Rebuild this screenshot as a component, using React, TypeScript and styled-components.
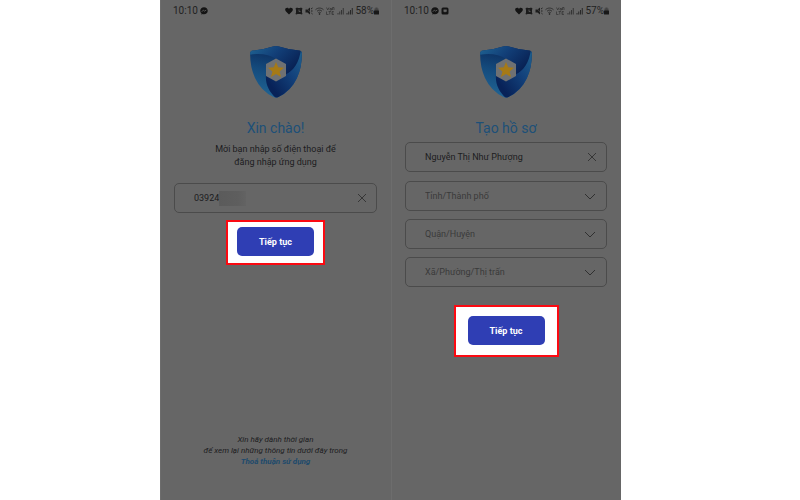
import React from "react";
import styled, { createGlobalStyle } from "styled-components";

const GlobalStyle = createGlobalStyle`
  * { box-sizing: border-box; }
  body { margin: 0; background: #fff; font-family: Roboto, "Noto Sans", sans-serif; }
  button, input, select { font: inherit; color: inherit; }
`;

const Page = styled.main`
  display: grid;
  grid-template-columns: 160fr 231fr 230fr 179fr;
  min-height: 100vh;
`;

const Phone = styled.section<{ $column: number }>`
  grid-column: ${(p) => p.$column};
  display: flex;
  flex-direction: column;
  align-items: center;
  padding: 0 14px 32px;
  background: #666;
  box-shadow: inset 1px 0 #6d6d6d;
  color: #1c1c1e;
`;

const StatusBar = styled.header`
  align-self: stretch;
  display: flex;
  align-items: center;
  gap: 2px;
  height: 21px;
  margin-left: -1px;
  margin-right: -2px;
  font-size: 10px;
  line-height: 12px;
  color: #222;

  svg { flex: none; }
`;

const StatusIcons = styled.div`
  display: flex;
  align-items: center;
  gap: 2px;
  margin-left: auto;
  white-space: nowrap;
`;

const Battery = styled.span`
  display: flex;
  align-items: center;
`;

const Logo = styled.svg`
  width: 54px;
  height: 54px;
  margin-top: 24px;
`;

const Title = styled.h1`
  margin: 20px 0 0;
  font-size: 14px;
  font-weight: 400;
  line-height: 18px;
  color: #1d5078;
`;

const Intro = styled.p`
  margin: 6px 0 0;
  font-size: 9px;
  line-height: 13px;
  text-align: center;
  white-space: nowrap;
`;

const Form = styled.form<{ $top: number }>`
  align-self: stretch;
  display: flex;
  flex-direction: column;
  align-items: center;
  gap: 9px;
  margin-top: ${(p) => p.$top}px;
`;

const Field = styled.div`
  align-self: stretch;
  display: flex;
  align-items: center;
  height: 30px;
  padding: 0 9px 0 19px;
  border: 1px solid #4b4b4b;
  border-radius: 5px;
  font-size: 9px;
`;

const TextInput = styled.input<{ $short?: boolean }>`
  flex: ${(p) => (p.$short ? "0 0 25px" : "1 1 0")};
  min-width: 0;
  width: 25px;
  height: 26px;
  padding: 0;
  border: 0;
  outline: 0;
  background: transparent;
`;

const Smudge = styled.span`
  width: 27px;
  height: 15px;
  background: linear-gradient(90deg, #5b5b5b, #5e5e5e 70%, #636363);
`;

const ClearButton = styled.button`
  display: flex;
  margin-left: auto;
  padding: 0;
  border: 0;
  background: none;
  color: #363636;
`;

const SelectField = styled(Field)`
  display: grid;
  grid-template-columns: 1fr 12px;
  padding-right: 10px;
  color: #3a3a3a;

  svg { grid-area: 1 / 2; pointer-events: none; }
`;

const Select = styled.select`
  grid-area: 1 / 1 / 2 / 3;
  height: 26px;
  padding: 0;
  border: 0;
  outline: 0;
  background: transparent;
  appearance: none;
`;

const Regions = styled.div`
  align-self: stretch;
  display: flex;
  flex-direction: column;
  gap: 8px;
`;

const Highlight = styled.div<{ $roomy?: boolean }>`
  display: flex;
  margin-top: ${(p) => (p.$roomy ? 9 : -2)}px;
  padding: ${(p) => (p.$roomy ? "9px 12px 10px" : "5px 9px 7px")};
  border: 2px solid #fb0a12;
  background: #fff;
`;

const Submit = styled.button`
  width: 77px;
  height: 29px;
  padding: 0;
  border: 0;
  border-radius: 5px;
  background: #2f3eb4;
  color: #fff;
  font-size: 9px;
  font-weight: 700;
`;

const Notice = styled.footer`
  margin-top: auto;
  font-size: 8px;
  font-style: italic;
  line-height: 11px;
  text-align: center;
  white-space: nowrap;
`;

const TermsLink = styled.a`
  display: block;
  font-weight: 700;
  line-height: 12px;
  color: #1d4a6c;
  text-decoration: none;
`;

const Messenger = () => (
  <svg width="8" height="8" viewBox="0 0 16 16" aria-hidden="true">
    <path d="M8 .5C3.700.5.500 3.600.500 7.700c0 2.200 1 4 2.500 5.300V15.500l2.400-1.300c.8.300 1.700.4 2.600.4 4.300 0 7.500-3 7.500-7S12.300.5 8 .5Z" fill="#141414" />
    <path d="m3.500 9.600 3.200-3.400 2.200 2 3.600-2" fill="none" stroke="#666" strokeWidth="1.600" />
  </svg>
);

const ChatBadge = () => (
  <svg width="8" height="8" viewBox="0 0 16 16" aria-hidden="true">
    <rect x="1" y="1" width="14" height="14" rx="3" fill="#141414" />
    <path d="M5 5h6.500v4.500H9.500L8 11 6.500 9.500H5Z" fill="#666" />
  </svg>
);

function SystemIcons({ level }: { level: string }) {
  return (
    <StatusIcons>
      <svg width="8" height="8" viewBox="0 0 16 16" aria-hidden="true">
        <path d="M8 15 2 9C-1.500 5 1 1.500 4.300 1.500 6 1.500 7.400 2.500 8 4c.6-1.500 2-2.500 3.700-2.500C15 1.500 17.500 5 14 9Z" fill="#141414" />
      </svg>
      <svg width="8" height="8" viewBox="0 0 16 16" aria-hidden="true">
        <path d="M1 3 4 1l2 1h4l2-1 3 2-1 3v5l1 3-2 1-2-1H5l-2 1-2-1 1-3V6Z" fill="#1c1c1c" />
        <path d="M8 5v4h3" fill="none" stroke="#666" strokeWidth="1.500" />
      </svg>
      <svg width="8" height="8" viewBox="0 0 16 16" aria-hidden="true">
        <path d="M1 5h4l5-4v14l-5-4H1Z" fill="#1c1c1c" />
        <path d="M12 4l3-2M12 8h3M12 12l3 2" fill="none" stroke="#222" strokeWidth="2" />
        <path d="m2 1 12 13" stroke="#5c5c5c" strokeWidth="1.200" />
      </svg>
      <svg width="9" height="8" viewBox="0 0 18 16" fill="none" stroke="#292929" strokeWidth="1.800" aria-hidden="true">
        <path d="M1 5.500c4.500-4.500 11.500-4.500 16 0M4 8.500c3-3 7-3 10 0M6.500 11.500c1.500-1.500 3.500-1.500 5 0" />
        <circle cx="9" cy="14" r="1" fill="#292929" />
      </svg>
      <svg width="9" height="8" viewBox="0 0 18 16" fill="none" stroke="#303030" strokeWidth="1.400" aria-hidden="true">
        <path d="m1 1 2.500 5L6 1M8 3h3v3H8ZM13 1v5M13 1h3v5M1 9v6h4M5 9h5M7.500 9v6M15.500 9H12v6h4M12 12h3" />
      </svg>
      {[0, 1].map((n) => (
        <svg key={n} width="7" height="8" viewBox="0 0 14 16" fill="#292929" aria-hidden="true">
          <path d="M1 12h2v3H1ZM4.500 9h2v6h-2ZM8 6h2v9H8ZM11.500 2h2v13h-2Z" fillOpacity={n ? 1 : 0.8} />
        </svg>
      ))}
      <Battery>
        {level}
        <svg width="5" height="8" viewBox="0 0 10 16" aria-hidden="true">
          <path d="M3 1h4v2h2v5H1V3h2Z" fill="#444" />
          <rect x="0" y="7" width="10" height="8" rx="1" fill="#181818" />
        </svg>
      </Battery>
    </StatusIcons>
  );
}

function ShieldLogo({ id }: { id: string }) {
  return (
    <Logo viewBox="0 0 54 54" role="img" aria-label="VNeID">
      <defs>
        <linearGradient id={`${id}-top`} x1="0" y1="0.200" x2="0.900" y2="0.700">
          <stop offset="0" stopColor="#1e6090" />
          <stop offset="0.450" stopColor="#123f78" />
          <stop offset="1" stopColor="#082052" />
        </linearGradient>
        <linearGradient id={`${id}-left`} x1="0.600" y1="0.100" x2="0.400" y2="1">
          <stop offset="0" stopColor="#0b2a5c" />
          <stop offset="0.450" stopColor="#144a7c" />
          <stop offset="1" stopColor="#206595" />
        </linearGradient>
        <linearGradient id={`${id}-right`} x1="1" y1="0" x2="0.200" y2="0.800">
          <stop offset="0" stopColor="#20648f" />
          <stop offset="0.500" stopColor="#13427c" />
          <stop offset="1" stopColor="#082258" />
        </linearGradient>
        <clipPath id={`${id}-shape`}>
          <path d="M4 5.500Q15 4.500 24 1.500q3-1 6 0 9 3 20 4 2.800.3 2.900 3Q53 22 48 33 42 46 29.500 52q-2.500 1.200-5 0Q12 46 6 33 1 22 1.100 8.500 1.200 5.800 4 5.500Z" />
        </clipPath>
      </defs>
      <g clipPath={`url(#${id}-shape)`}>
        <rect width="54" height="54" fill={`url(#${id}-left)`} />
        <path d="M0 10V0h54v7C51 18 45 26 36 30L27 24V14C20 9 10 8 0 10Z" fill={`url(#${id}-top)`} />
        <path d="M54 4v50H28C20 47 16 39 17 29l10-4 9 5C45 26 50 17 52 5Z" fill={`url(#${id}-right)`} />
      </g>
      <path d="m27 13.500 10 5.500v12l-10 5.500L17 31V19Z" fill="#6f7173" />
      <path d="m27 17 2.200 5.200 5.800.5-4.400 3.700 1.400 5.600-5-3-5 3 1.400-5.600-4.400-3.700 5.800-.5Z" fill="#a67a16" />
    </Logo>
  );
}

const Cross = () => (
  <svg width="10" height="10" viewBox="0 0 10 10" fill="none" stroke="currentColor" aria-hidden="true">
    <path d="m1 1 8 8M9 1 1 9" />
  </svg>
);

const Chevron = () => (
  <svg width="12" height="7" viewBox="0 0 12 7" fill="none" stroke="#303030" aria-hidden="true">
    <path d="m1 1 5 5 5-5" />
  </svg>
);

const regions = ["Tỉnh/Thành phố", "Quận/Huyện", "Xã/Phường/Thị trấn"];

export default function App() {
  return (
    <>
      <GlobalStyle />
      <Page>
        <Phone $column={2}>
          <StatusBar>
            <span>10:10</span>
            <Messenger />
            <SystemIcons level="58%" />
          </StatusBar>
          <ShieldLogo id="login" />
          <Title>Xin chào!</Title>
          <Intro>
            Mời bạn nhập số điện thoại để
            <br />
            đăng nhập ứng dụng
          </Intro>
          <Form $top={14} onSubmit={(e) => e.preventDefault()}>
            <Field>
              <TextInput $short aria-label="Số điện thoại" defaultValue="03924" />
              <Smudge />
              <ClearButton type="reset" aria-label="Xóa số điện thoại">
                <Cross />
              </ClearButton>
            </Field>
            <Highlight>
              <Submit type="submit">Tiếp tục</Submit>
            </Highlight>
          </Form>
          <Notice>
            Xin hãy dành thời gian
            <br />
            để xem lại những thông tin dưới đây trong
            <TermsLink href="#terms">Thoả thuận sử dụng</TermsLink>
          </Notice>
        </Phone>
        <Phone $column={3}>
          <StatusBar>
            <span>10:10</span>
            <Messenger />
            <ChatBadge />
            <SystemIcons level="57%" />
          </StatusBar>
          <ShieldLogo id="profile" />
          <Title>Tạo hồ sơ</Title>
          <Form $top={5} onSubmit={(e) => e.preventDefault()}>
            <Field>
              <TextInput aria-label="Họ và tên" defaultValue="Nguyễn Thị Như Phượng" />
              <ClearButton type="reset" aria-label="Xóa họ và tên">
                <Cross />
              </ClearButton>
            </Field>
            <Regions>
              {regions.map((label) => (
                <SelectField key={label}>
                  <Select aria-label={label}>
                    <option>{label}</option>
                  </Select>
                  <Chevron />
                </SelectField>
              ))}
            </Regions>
            <Highlight $roomy>
              <Submit type="submit">Tiếp tục</Submit>
            </Highlight>
          </Form>
        </Phone>
      </Page>
    </>
  );
}
